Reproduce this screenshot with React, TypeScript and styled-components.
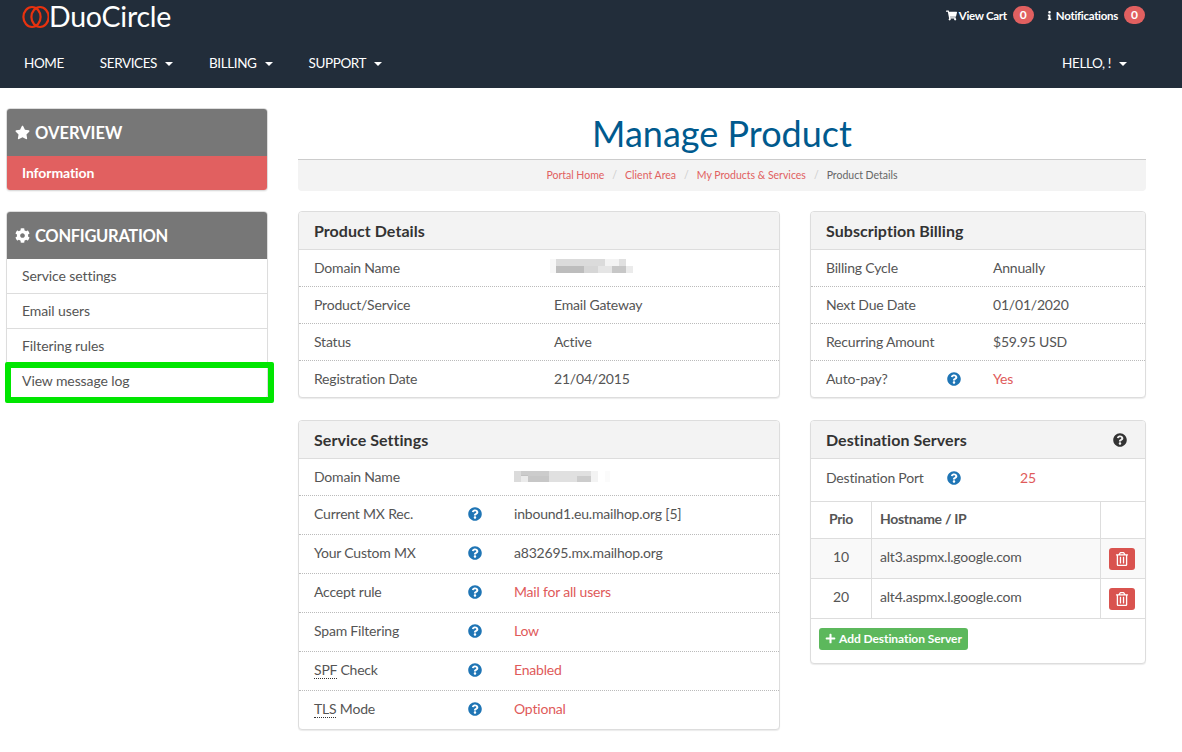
import React from "react";
import styled, { createGlobalStyle } from "styled-components";
import { FaStar, FaCog, FaShoppingCart, FaInfo, FaQuestionCircle, FaRegTrashAlt, FaPlus } from "react-icons/fa";

const Global = createGlobalStyle`
  html, body { margin: 0; padding: 0; background: #fff; }
  body { font-family: Lato, "Liberation Sans", sans-serif; font-size: 14px; letter-spacing: -0.2px; color: #555; height: 752px; overflow: hidden; }
  * { box-sizing: border-box; }
`;

const Header = styled.header`
  height: 88px;
  background: #222d3a;
  color: #fff;
  display: flex;
  flex-direction: column;
`;
const TopBar = styled.div`
  height: 38px;
  padding: 0 37px 0 22px;
  display: flex;
  justify-content: space-between;
  align-items: flex-start;
`;
const Logo = styled.div`
  display: flex;
  align-items: center;
  height: 33px;
  font-size: 28.5px;
  font-weight: 400;
  letter-spacing: -0.25px;
  line-height: 33px;
`;
const TopLinks = styled.div`
  display: flex;
  align-items: center;
  height: 30px;
  font-size: 11.5px;
  font-weight: 700;
  letter-spacing: -0.3px;
  gap: 11px;
`;
const TopLink = styled.span`
  display: flex;
  align-items: center;
  gap: 2px;
`;
const Count = styled.span`
  min-width: 21px;
  height: 18px;
  margin-left: 4px;
  border-radius: 9px;
  background: #e16060;
  font-size: 12px;
  line-height: 18px;
  letter-spacing: 0;
  text-align: center;
`;
const Nav = styled.nav`
  height: 50px;
  padding: 0 55px 0 24px;
  display: flex;
  align-items: center;
  gap: 36px;
  font-size: 13.5px;
  font-weight: 400;
  letter-spacing: -0.4px;
`;
const NavItem = styled.span<{ $push?: boolean }>`
  display: flex;
  align-items: center;
  margin-left: ${(p) => (p.$push ? "auto" : "0")};
`;
const Caret = styled.i`
  width: 0;
  height: 0;
  margin-left: 8px;
  margin-top: 2px;
  border-left: 4px solid transparent;
  border-right: 4px solid transparent;
  border-top: 4px solid #fff;
`;
const Page = styled.div`
  display: grid;
  grid-template-columns: 262px 848px;
  column-gap: 30px;
  padding: 20px 0 0 6px;
`;
const Sidebar = styled.aside`
  display: flex;
  flex-direction: column;
  gap: 20px;
`;
const SideCard = styled.div`
  position: relative;
  border: 1px solid #ddd;
  border-radius: 4px;
  background: #fff;
  box-shadow: 0 1px 1px rgba(0,0,0,.05);
`;
const SideHead = styled.div<{ $tight?: boolean }>`
  height: 47px;
  background: #777;
  border-radius: 3px 3px 0 0;
  color: #fff;
  font-size: 16.5px;
  font-weight: 700;
  letter-spacing: ${(p) => (p.$tight ? "-0.3px" : "0")};
  display: flex;
  align-items: center;
  gap: 5px;
  padding: 0 8px;
  svg { font-size: 15px; }
`;
const SideActive = styled.div`
  height: 34px;
  padding: 0 15px 2px;
  background: #e16060;
  border-radius: 0 0 3px 3px;
  color: #fff;
  font-weight: 700;
  letter-spacing: -0.1px;
  display: flex;
  align-items: center;
`;
const SideItem = styled.div`
  height: 34px;
  padding: 0 15px 1px;
  display: flex;
  align-items: center;
  color: #555;
  letter-spacing: -0.1px;
  & + & { border-top: 1px solid #ddd; height: 35px; }
`;
const Highlight = styled.div`
  position: absolute;
  left: -2px;
  right: -7px;
  bottom: -5px;
  height: 41px;
  border: 6px solid #00e600;
  border-radius: 2px;
  pointer-events: none;
`;
const Main = styled.main`
  display: flex;
  flex-direction: column;
`;
const Title = styled.h1`
  margin: 0;
  height: 51px;
  font-size: 36px;
  font-weight: 400;
  line-height: 50px;
  letter-spacing: 0;
  color: #005a8e;
  text-align: center;
`;
const Crumbs = styled.div`
  height: 32px;
  padding-bottom: 2px;
  background: #f3f3f3;
  border-top: 1px solid #ccc;
  border-radius: 0 0 4px 4px;
  display: flex;
  align-items: center;
  justify-content: center;
  font-size: 10.5px;
  letter-spacing: 0;
  color: #666;
`;
const Crumb = styled.span`
  color: #e16060;
`;
const Slash = styled.span`
  color: #ccc;
  margin: 0 8px;
`;
const Columns = styled.div`
  display: grid;
  grid-template-columns: 482px 336px;
  column-gap: 30px;
  margin-top: 20px;
`;
const Col = styled.div`
  display: flex;
  flex-direction: column;
  gap: 22px;
`;
const Panel = styled.section`
  border: 1px solid #ddd;
  border-radius: 4px;
  background: #fff;
  box-shadow: 0 1px 1px rgba(0,0,0,.08);
`;
const PanelHead = styled.div`
  height: 38px;
  padding: 0 15px;
  background: #f3f3f3;
  border-bottom: 1px solid #ddd;
  border-radius: 3px 3px 0 0;
  display: flex;
  align-items: center;
  justify-content: space-between;
  color: #333;
  font-size: 16px;
  font-weight: 700;
  letter-spacing: 0.05px;
  svg { font-size: 14px; color: #333; margin-right: 3px; }
`;
const Row = styled.div<{ $h: number; $cols: string }>`
  height: ${(p) => p.$h}px;
  padding: 0 15px ${(p) => (p.$h >= 39 ? 3 : 1)}px;
  display: grid;
  grid-template-columns: ${(p) => p.$cols};
  align-items: center;
  & + & { border-top: 1px dotted #bbb; }
`;
const Value = styled.span<{ $red?: boolean }>`
  color: ${(p) => (p.$red ? "#e05a5a" : "#555")};
`;
const Abbr = styled.span`
  border-bottom: 1px dotted #333;
`;
const Help = styled(FaQuestionCircle)`
  font-size: 14px;
  color: #1f75b5;
  display: block;
`;
const BlurWide = styled.svg`
  display: block;
  margin-left: -4px;
`;
const BlurNarrow = styled.svg`
  display: block;
`;
const Table = styled.div`
  border-top: 1px solid #ddd;
  margin-top: 2px;
`;
const TableRow = styled.div<{ $shade?: boolean; $h: number }>`
  display: grid;
  grid-template-columns: 61px 229px 44px;
  height: ${(p) => p.$h}px;
  background: ${(p) => (p.$shade ? "#f9f9f9" : "#fff")};
  border-bottom: 1px solid #ddd;
`;
const Cell = styled.div<{ $center?: boolean; $bold?: boolean }>`
  display: flex;
  align-items: center;
  justify-content: ${(p) => (p.$center ? "center" : "flex-start")};
  padding: 0 ${(p) => (p.$center ? "0" : "8px")} 4px;
  font-weight: ${(p) => (p.$bold ? 700 : 400)};
  letter-spacing: ${(p) => (p.$bold ? "-0.3px" : "-0.2px")};
  border-right: 1px solid #ddd;
`;
const ActionCell = styled.div`
  display: flex;
  align-items: center;
  padding-left: 8px;
`;
const TrashBtn = styled.button`
  width: 26px;
  height: 22px;
  padding: 0;
  border: 0;
  border-radius: 3px;
  background: #d9534f;
  color: #fff;
  display: flex;
  align-items: center;
  justify-content: center;
  font-size: 14px;
`;
const AddWrap = styled.div`
  padding: 9px 8px 13px;
`;
const AddBtn = styled.button`
  height: 22px;
  padding: 0 6px 2px;
  border: 0;
  border-radius: 3px;
  background: #5cb85c;
  color: #fff;
  font-family: inherit;
  font-size: 12px;
  font-weight: 700;
  letter-spacing: -0.07px;
  display: inline-flex;
  align-items: center;
  gap: 3px;
`;
const Rings = styled.svg`
  display: block;
`;

const blocks = (cells: number[][]) =>
  cells.map(([x, y, w, h, o], i) => <rect key={i} x={x} y={y} width={w} height={h} fill="#999" opacity={o} />);

const BlurA = () => (
  <BlurWide width="92" height="18" viewBox="0 0 92 18">
    {blocks([[0, 0, 6, 14, 0.08], [6, 0, 49, 7, 0.35], [55, 0, 14, 7, 0.12], [69, 0, 7, 7, 0.3], [6, 7, 28, 7, 0.65], [34, 7, 14, 7, 0.4], [48, 7, 14, 7, 0.25], [62, 7, 14, 7, 0.55], [76, 7, 7, 7, 0.2]])}
  </BlurWide>
);
const BlurB = () => (
  <BlurNarrow width="98" height="12" viewBox="0 0 98 12">
    {blocks([[0, 0, 7, 11, 0.35], [7, 4, 7, 7, 0.2], [7, 0, 28, 5, 0.5], [14, 5, 21, 6, 0.55], [35, 0, 14, 11, 0.3], [49, 0, 14, 11, 0.3], [63, 0, 14, 5, 0.3], [63, 5, 14, 6, 0.5], [77, 0, 7, 11, 0.12], [91, 0, 5, 11, 0.04]])}
  </BlurNarrow>
);

const detailCols = "240px 1fr";
const billingCols = "121px 46px 1fr";
const serviceCols = "154px 46px 1fr";

export default function App() {
  return (
    <>
      <Global />
      <Header>
        <TopBar>
          <Logo>
            <Rings width="27" height="26" viewBox="0 0 27 26">
              <ellipse cx="10" cy="13" rx="8.6" ry="10" fill="none" stroke="#e8320f" strokeWidth="2.2" />
              <ellipse cx="18" cy="13" rx="8.6" ry="10" fill="none" stroke="#e8320f" strokeWidth="2.2" />
            </Rings>
            DuoCircle
          </Logo>
          <TopLinks>
            <TopLink><FaShoppingCart size={11} /> View Cart<Count>0</Count></TopLink>
            <TopLink><FaInfo size={9} /> Notifications<Count>0</Count></TopLink>
          </TopLinks>
        </TopBar>
        <Nav>
          <NavItem>HOME</NavItem>
          <NavItem>SERVICES<Caret /></NavItem>
          <NavItem>BILLING<Caret /></NavItem>
          <NavItem>SUPPORT<Caret /></NavItem>
          <NavItem $push>HELLO, !<Caret /></NavItem>
        </Nav>
      </Header>
      <Page>
        <Sidebar>
          <SideCard>
            <SideHead><FaStar />OVERVIEW</SideHead>
            <SideActive>Information</SideActive>
          </SideCard>
          <SideCard>
            <SideHead $tight><FaCog />CONFIGURATION</SideHead>
            <SideItem>Service settings</SideItem>
            <SideItem>Email users</SideItem>
            <SideItem>Filtering rules</SideItem>
            <SideItem>View message log</SideItem>
            <Highlight />
          </SideCard>
        </Sidebar>
        <Main>
          <Title>Manage Product</Title>
          <Crumbs>
            <Crumb>Portal Home</Crumb><Slash>/</Slash>
            <Crumb>Client Area</Crumb><Slash>/</Slash>
            <Crumb>My Products &amp; Services</Crumb><Slash>/</Slash>
            <span>Product Details</span>
          </Crumbs>
          <Columns>
            <Col>
              <Panel>
                <PanelHead>Product Details</PanelHead>
                <Row $h={36} $cols={detailCols}><span>Domain Name</span><BlurA /></Row>
                <Row $h={37} $cols={detailCols}><span>Product/Service</span><Value>Email Gateway</Value></Row>
                <Row $h={37} $cols={detailCols}><span>Status</span><Value>Active</Value></Row>
                <Row $h={37} $cols={detailCols}><span>Registration Date</span><Value>21/04/2015</Value></Row>
              </Panel>
              <Panel>
                <PanelHead>Service Settings</PanelHead>
                <Row $h={36} $cols="200px 1fr"><span>Domain Name</span><BlurB /></Row>
                <Row $h={39} $cols={serviceCols}><span>Current MX Rec.</span><Help /><Value>inbound1.eu.mailhop.org [5]</Value></Row>
                <Row $h={39} $cols={serviceCols}><span>Your Custom MX</span><Help /><Value>a832695.mx.mailhop.org</Value></Row>
                <Row $h={39} $cols={serviceCols}><span>Accept rule</span><Help /><Value $red>Mail for all users</Value></Row>
                <Row $h={39} $cols={serviceCols}><span>Spam Filtering</span><Help /><Value $red>Low</Value></Row>
                <Row $h={39} $cols={serviceCols}><span><Abbr>SPF</Abbr> Check</span><Help /><Value $red>Enabled</Value></Row>
                <Row $h={39} $cols={serviceCols}><span><Abbr>TLS</Abbr> Mode</span><Help /><Value $red>Optional</Value></Row>
              </Panel>
            </Col>
            <Col>
              <Panel>
                <PanelHead>Subscription Billing</PanelHead>
                <Row $h={36} $cols="167px 1fr"><span>Billing Cycle</span><Value>Annually</Value></Row>
                <Row $h={37} $cols="167px 1fr"><span>Next Due Date</span><Value>01/01/2020</Value></Row>
                <Row $h={37} $cols="167px 1fr"><span>Recurring Amount</span><Value>$59.95 USD</Value></Row>
                <Row $h={37} $cols={billingCols}><span>Auto-pay?</span><Help /><Value $red>Yes</Value></Row>
              </Panel>
              <Panel>
                <PanelHead>Destination Servers<FaQuestionCircle /></PanelHead>
                <Row $h={40} $cols="121px 73px 1fr"><span>Destination Port</span><Help /><Value $red>25</Value></Row>
                <Table>
                  <TableRow $h={37}><Cell $center $bold>Prio</Cell><Cell $bold>Hostname / IP</Cell><ActionCell /></TableRow>
                  <TableRow $h={40} $shade><Cell $center>10</Cell><Cell>alt3.aspmx.l.google.com</Cell><ActionCell><TrashBtn aria-label="Delete"><FaRegTrashAlt /></TrashBtn></ActionCell></TableRow>
                  <TableRow $h={40}><Cell $center>20</Cell><Cell>alt4.aspmx.l.google.com</Cell><ActionCell><TrashBtn aria-label="Delete"><FaRegTrashAlt /></TrashBtn></ActionCell></TableRow>
                </Table>
                <AddWrap><AddBtn><FaPlus size={11} />Add Destination Server</AddBtn></AddWrap>
              </Panel>
            </Col>
          </Columns>
        </Main>
      </Page>
    </>
  );
}
